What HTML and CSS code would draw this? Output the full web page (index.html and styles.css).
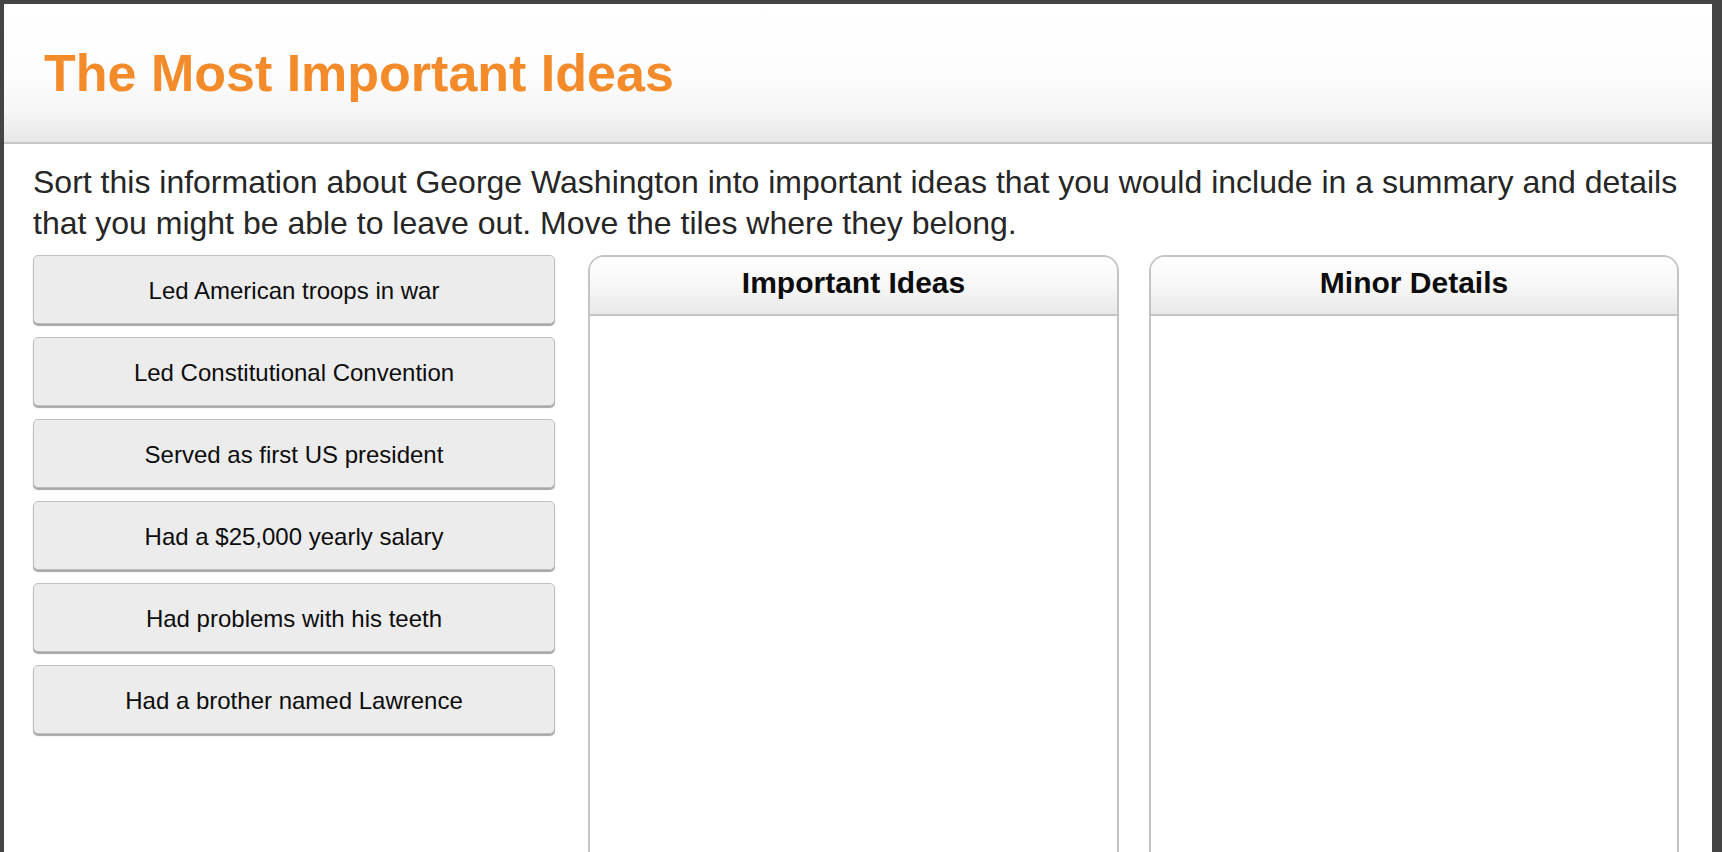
FILE: index.html
```html
<!DOCTYPE html>
<html lang="en">
<head>
<meta charset="utf-8">
<title>The Most Important Ideas</title>
<link rel="stylesheet" href="styles.css">
</head>
<body>
<div class="screen">
  <header class="topbar">
    <h1 class="title">The Most Important Ideas</h1>
  </header>
  <main class="content">
    <p class="prompt">Sort this information about George Washington into important ideas that you would include in a summary and details that you might be able to leave out. Move the tiles where they belong.</p>
    <div class="board">
      <div class="tiles">
        <div class="tile">Led American troops in war</div>
        <div class="tile">Led Constitutional Convention</div>
        <div class="tile">Served as first US president</div>
        <div class="tile">Had a $25,000 yearly salary</div>
        <div class="tile">Had problems with his teeth</div>
        <div class="tile">Had a brother named Lawrence</div>
      </div>
      <section class="bin bin-important">
        <div class="bin-head">Important Ideas</div>
        <div class="bin-body"></div>
      </section>
      <section class="bin bin-minor">
        <div class="bin-head">Minor Details</div>
        <div class="bin-body"></div>
      </section>
    </div>
  </main>
</div>
</body>
</html>
```
FILE: styles.css
```css
html, body {
  margin: 0;
  height: 100%;
}
body {
  background: #444444;
  overflow: hidden;
  font-family: "Liberation Sans", Arial, Helvetica, sans-serif;
}
.screen {
  margin: 4px 10px 0 4px;
  height: 848px;
  background: #ffffff;
  overflow: hidden;
  display: flex;
  flex-direction: column;
}
.topbar {
  flex: none;
  height: 140px;
  box-sizing: border-box;
  padding: 43px 0 0 40px;
  border-bottom: 2px solid #c6c6c6;
  background: linear-gradient(#ffffff 0%, #fdfdfd 50%, #f6f6f6 78%, #e7e7e7 100%);
}
.title {
  margin: 0;
  font-size: 52px;
  line-height: 52px;
  font-weight: bold;
  color: #f38b2b;
}
.content {
  flex: 1;
  padding: 18px 10px 0 29px;
}
.prompt {
  margin: 0;
  font-size: 32px;
  line-height: 41px;
  color: #262626;
}
.board {
  display: flex;
  align-items: flex-start;
  margin-top: 11px;
}
.tiles {
  flex: none;
  width: 522px;
  margin-right: 33px;
  display: flex;
  flex-direction: column;
  gap: 13px;
}
.tile {
  height: 69px;
  box-sizing: border-box;
  padding-top: 2px;
  border: 1px solid #bfbfbf;
  border-radius: 5px;
  background: #ececec;
  box-shadow: 0 2px 1px #a6a6a6;
  display: flex;
  align-items: center;
  justify-content: center;
  font-size: 24px;
  color: #0d0d0d;
}
.bin {
  flex: none;
  width: 531px;
  height: 640px;
  box-sizing: border-box;
  border: 2px solid #c4c4c4;
  border-bottom: none;
  border-radius: 16px 16px 0 0;
  background: #ffffff;
}
.bin-minor {
  width: 530px;
  margin-left: 30px;
}
.bin-head {
  height: 59px;
  box-sizing: border-box;
  padding-bottom: 6px;
  border-bottom: 2px solid #c4c4c4;
  border-radius: 14px 14px 0 0;
  background: linear-gradient(#ffffff 0%, #f7f7f7 50%, #e8e8e8 100%);
  display: flex;
  align-items: center;
  justify-content: center;
  font-size: 30px;
  font-weight: bold;
  color: #0d0d0d;
}
```
